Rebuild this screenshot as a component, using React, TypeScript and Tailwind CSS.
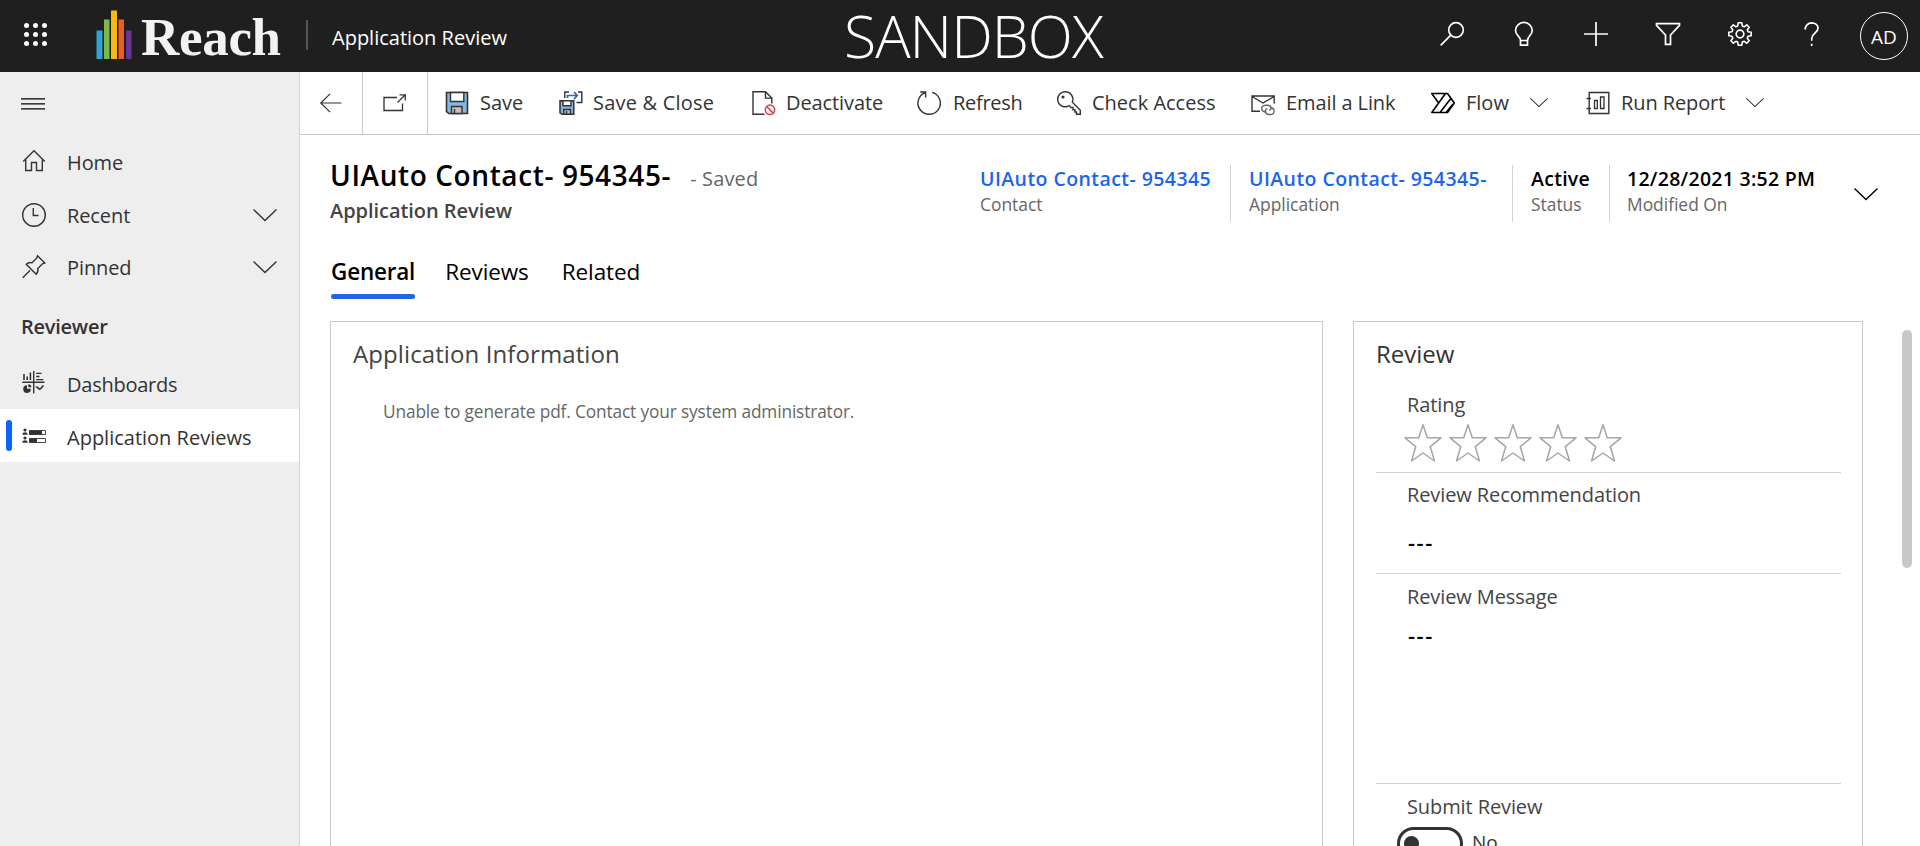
import type { ReactNode } from "react";

type IconProps = { className?: string; children?: ReactNode };

function Line({ className = "", children }: IconProps) {
  return (
    <svg
      viewBox="0 0 24 24"
      className={`h-6 w-6 shrink-0 overflow-visible ${className}`}
      fill="none"
      stroke="currentColor"
      strokeWidth="1.4"
    >
      {children}
    </svg>
  );
}

function Chevron({ className = "" }: { className?: string }) {
  return (
    <svg
      viewBox="0 0 24 12"
      className={`shrink-0 overflow-visible ${className}`}
      fill="none"
      stroke="currentColor"
      strokeWidth="1.4"
    >
      <path d="M.5 .5 12 11.5 23.5 .5" />
    </svg>
  );
}

const navIcons = {
  home: (
    <Line>
      <path d="M1.2 11.5 12 .8 22.8 11.5M3.7 9.200V20.500H9.500V12.500H14.500V20.500H20.300V9.200" />
    </Line>
  ),
  recent: (
    <Line>
      <circle cx="12" cy="12" r="11.3" />
      <path d="M11.3 5V12.5H16.5" />
    </Line>
  ),
  pinned: (
    <Line>
      <path d="M.7 22.8 8 15.500M15.5 .8 22.8 8 20.5 8.800 15.8 13.5C16.3 15.500 15.6 17.800 14.2 19.3L4.2 9.300C5.7 7.900 8 7.200 10.1 7.800L14.8 3Z" />
    </Line>
  ),
  dashboards: (
    <Line>
      <path d="M11.7 0V22.5M.3 11.2H22.500" />
      <path d="M2 3V9M5.200 5.500V9M8.400 1.500V9" strokeWidth="1.600" />
      <path d="M14.200 2.300H19.500M14.200 5.500H17.500M14.200 8.700H21.300" strokeWidth="1.300" />
      <path d="M5 14.300V17.800H8.800A3.800 3.800 0 1 1 5 14.300Z" fill="currentColor" stroke="none" />
      <path d="M6.300 13.300V16.300H9.300A3 3 0 0 0 6.300 13.300Z" fill="currentColor" stroke="none" />
      <path d="M14 16.500C15.500 15 17 19.500 18.500 17.800L21.500 14.500" strokeWidth="1.700" />
    </Line>
  ),
  reviews: (
    <Line>
      <circle cx="3" cy="6" r="1.600" fill="currentColor" stroke="none" />
      <path d="M.3 10.700C.3 7.500 5.700 7.500 5.700 10.700Z" fill="currentColor" stroke="none" />
      <circle cx="3" cy="14" r="1.600" fill="currentColor" stroke="none" />
      <path d="M.3 18.700C.3 15.500 5.700 15.500 5.700 18.700Z" fill="currentColor" stroke="none" />
      <path d="M7.500 6.500H23.500V10.500H7.500ZM7.500 14.500H23.500V18.500H7.500Z" strokeWidth=".9" />
      <path d="M7 6.500H20V10.500H7ZM7 14.500H15V18.500H7Z" fill="currentColor" stroke="none" />
    </Line>
  ),
};

function Floppy() {
  return (
    <Line>
      <path d="M1.500 1.500H22.500V22.500H4L1.500 20.500Z" fill="#85b7e2" strokeWidth="1.600" />
      <path d="M5.500 1.500H18.800V10.500H5.500Z" fill="#fff" />
      <path d="M6.500 22.500V15.500H17V22.500Z" fill="#c9bfb8" />
      <path d="M9.500 18V22.500" />
    </Line>
  );
}

function FloppyClose() {
  return (
    <Line>
      <path d="M1 9.700H14.800V23.300H3L1 21.800Z" fill="#85b7e2" strokeWidth="1.500" />
      <path d="M4 9.700H12V14.700H4Z" fill="#fff" />
      <path d="M4.700 23.300V18.500H11.500V23.300Z" fill="#c9bfb8" />
      <path d="M7.500 20V23.300" />
      <path d="M10 1H5.800V7M19 1H22.800V11.500H17.500" />
      <path d="M8.500 7V4.500H18M15 1.200 18.300 4.500 15 7.800" stroke="#2b6cb0" strokeWidth="1.700" />
    </Line>
  );
}

function DeactivatePage() {
  return (
    <Line>
      <path d="M12.500 23.300H1V.8H13.500L19.800 7.100V12.500M13.500 .8V7.100H19.800" />
      <circle cx="18" cy="18.800" r="4.700" stroke="#d9454d" strokeWidth="1.600" />
      <path d="M14.700 15.500 21.300 22.100" stroke="#d9454d" strokeWidth="1.600" />
    </Line>
  );
}

function RefreshArrow() {
  return (
    <Line>
      <path d="M15.200 1.300A11.200 11.200 0 1 1 8.200 1.600M3.200 1H8.600V6.400" />
    </Line>
  );
}

function Key() {
  return (
    <Line>
      <path d="M8.300 .8A7.500 7.500 0 1 0 10.200 15.500L12 14.500L14 16.500H16V18.800H18V21H19.500V23.200H23.300V19.200L15.300 11.200A7.500 7.500 0 0 0 8.300 .8Z" />
      <circle cx="6" cy="6" r="1.600" fill="currentColor" stroke="none" />
    </Line>
  );
}

function MailLink() {
  return (
    <Line>
      <path d="M9 20.200H1V5H23.200V12.500M1 5.500 12 12 23.200 5.500" />
      <path d="M15.500 20.800C9.500 21.500 9 14.500 14.500 14.300H16.500C21 14.300 21 19 18 19.300" stroke="#666" />
      <path d="M19.500 16.800C24.500 17 24 23.500 19.500 23.500H17.800C13.500 23.500 13.300 18 16.500 17.600" stroke="#666" />
    </Line>
  );
}

function FlowMark() {
  return (
    <Line className="text-black">
      <path
        d="M.8 2.500H16.500L23.300 12 16.500 21.500H.8L7.600 12ZM.8 21.500 14.500 2.500M9 21.500 20 7.200M15 21.500 22 13"
        strokeWidth="1.600"
        strokeLinejoin="round"
      />
    </Line>
  );
}

function Report() {
  return (
    <Line>
      <path d="M3.200 1.500H22.800V22.500H3.200Z" />
      <path d="M.5 7.500H5M.5 17.500H5" />
      <path d="M8.500 9.500H11.300V17.500H8.500ZM14.500 6H18V17.500H14.500Z" strokeWidth="1.300" />
    </Line>
  );
}

function Command({
  icon,
  label,
  className,
  textClass = "ml-[11px]",
  chevron,
}: {
  icon: ReactNode;
  label: string;
  className: string;
  textClass?: string;
  chevron?: boolean;
}) {
  return (
    <button className={`flex h-full shrink-0 items-center whitespace-nowrap ${className}`}>
      {icon}
      <span className={`leading-7 ${textClass}`}>{label}</span>
      {chevron && <Chevron className="ml-[21px] mt-[-2px] h-[9px] w-[18px]" />}
    </button>
  );
}

function NavItem({
  icon,
  label,
  chevron,
  className = "",
  textClass = "pt-[2px]",
}: {
  icon: ReactNode;
  label: string;
  chevron?: boolean;
  className?: string;
  textClass?: string;
}) {
  return (
    <a className={`flex shrink-0 items-center pl-[22px] pr-[22px] ${className}`}>
      {icon}
      <span className={`ml-[21px] flex-1 whitespace-nowrap leading-7 ${textClass}`}>{label}</span>
      {chevron && <Chevron className="h-3 w-6" />}
    </a>
  );
}

function HeaderField({
  value,
  label,
  link,
  className,
}: {
  value: string;
  label: string;
  link?: boolean;
  className: string;
}) {
  return (
    <div className={`h-[57px] shrink-0 whitespace-nowrap pt-px ${className}`}>
      <div
        className={`text-[19.5px] font-semibold leading-[26px] ${
          link ? "tracking-[0.43px] text-[#1b66e8]" : "tracking-[0.28px] text-black"
        }`}
      >
        {value}
      </div>
      <div className="text-[17.4px] leading-[25px] text-[#666]">{label}</div>
    </div>
  );
}

function Star() {
  return (
    <svg
      viewBox="0 0 38 38"
      className="h-[38px] w-[38px]"
      fill="none"
      stroke="#a6a6a6"
      strokeWidth="1.5"
      strokeLinejoin="round"
    >
      <path d="M19 .8 23.300 13.800H37L26.300 22.700 30.500 37 19 29 7.500 37 11.700 22.700 1 13.800H14.700Z" />
    </svg>
  );
}

function TopBar() {
  const dots = [0, 9, 18];
  return (
    <header className="flex h-[72px] shrink-0 items-center bg-[#1f1f1f] text-white">
      <svg viewBox="0 0 24 24" className="ml-6 mt-[-2px] h-6 w-6 shrink-0" fill="#fff">
        {dots.map((y) => dots.map((x) => <circle key={`${x}-${y}`} cx={x + 2.5} cy={y + 2.5} r="2.5" />))}
      </svg>
      <svg viewBox="0 0 36 49" className="ml-12 mt-[-4px] h-[49px] w-9 shrink-0">
        <path d="M.5 20.500H6.500V49H.5Z" fill="#2ea3d9" />
        <path d="M8 9.500H13.500V49H8Z" fill="#7dba41" />
        <path d="M15 .5H21V49H15Z" fill="#fbb814" />
        <path d="M22.500 9.500H28V49H22.500Z" fill="#ee5a28" />
        <path d="M30 20.500H35.500V49H30Z" fill="#6a3590" />
      </svg>
      <span className="ml-[9px] mt-[3px] w-[165px] shrink-0 whitespace-nowrap font-['Liberation_Serif',serif] text-[53px] font-bold leading-[69px] tracking-[-0.3px] text-[#f2f2f2]">
        Reach
      </span>
      <span className="mt-[-2px] h-[30px] w-[2px] shrink-0 bg-[#555]" />
      <span className="ml-[24px] mt-[3px] w-[512px] shrink-0 whitespace-nowrap text-[20px]">Application Review</span>
      <span className="mt-[-2px] w-[596px] shrink-0 whitespace-nowrap text-[59px] font-light leading-[70px] tracking-[-1px]">
        SANDBOX
      </span>
      <div className="mt-[-4px] flex shrink-0 items-center gap-12">
        <Line>
          <circle cx="16" cy="8" r="7.300" strokeWidth="1.700" />
          <path d="M10.800 13.200 .7 23.300" strokeWidth="1.700" />
        </Line>
        <Line>
          <path
            d="M8.500 18.500C8.500 14 3.500 13.500 3.500 8.500A8.300 8 0 0 1 20.200 8.500C20.200 13.500 15.500 14 15.500 18.500ZM8.500 18.500V23.200H15.500V18.500"
            strokeWidth="1.700"
          />
        </Line>
        <Line>
          <path d="M12 0V24M0 12H24" strokeWidth="1.700" />
        </Line>
        <Line>
          <path d="M.5 1.700H23.500V3.300L14.500 13V22.300H9.500V13L.5 3.300Z" strokeWidth="1.700" />
        </Line>
        <Line>
          <path
            d="M10.200 .8H13.800L14.300 4 16.200 4.800 18.800 2.900 21.200 5.300 19.300 7.900 20 9.700 23.200 10.200V13.800L20 14.300 19.300 16.200 21.200 18.800 18.800 21.200 16.200 19.300 14.300 20 13.800 23.200H10.200L9.700 20 7.900 19.300 5.300 21.200 2.900 18.800 4.800 16.200 4 14.300 .8 13.800V10.200L4 9.700 4.800 7.900 2.900 5.300 5.300 2.900 7.900 4.800 9.700 4Z"
            strokeWidth="1.600"
            strokeLinejoin="round"
          />
          <circle cx="12" cy="12" r="3.800" strokeWidth="1.700" />
        </Line>
        <Line>
          <path
            d="M5.200 7.500A6.500 6.500 0 0 1 11.500 .9C15.500 .9 18 3.300 18 6.300C18 11 11.700 11.500 11.700 16.500V18.800M11.700 21.800V24"
            strokeWidth="1.700"
          />
        </Line>
      </div>
      <div className="ml-[36px] flex h-12 w-12 shrink-0 items-center justify-center rounded-full border border-white pt-[2px] text-[19px]">
        AD
      </div>
    </header>
  );
}

function Sidebar() {
  return (
    <nav className="flex w-[300px] shrink-0 flex-col border-r border-[#d2d2d2] bg-[#eee] text-[20px] tracking-[-0.1px] text-[#333]">
      <svg viewBox="0 0 24 12" className="ml-[21px] mt-[26px] h-3 w-6 shrink-0" stroke="#000" strokeWidth="1.3">
        <path d="M0 .8H24M0 5.800H24M0 10.800H24" />
      </svg>
      <NavItem className="mt-[26px] h-[52px]" icon={navIcons.home} label="Home" />
      <NavItem className="h-[53px]" icon={navIcons.recent} label="Recent" chevron />
      <NavItem className="h-[52px]" icon={navIcons.pinned} label="Pinned" chevron />
      <h2 className="mt-[20px] pl-[21px] font-semibold leading-7 tracking-[-0.25px]">Reviewer</h2>
      <NavItem
        className="mt-[16px] h-[52px]"
        icon={navIcons.dashboards}
        label="Dashboards"
        textClass="pt-[4px] tracking-[-0.25px]"
      />
      <a className="flex h-[53px] shrink-0 items-center bg-white pl-[6px]">
        <span className="h-[31px] w-[6px] rounded-sm bg-[#0a64f5]" />
        <span className="ml-[10px]">{navIcons.reviews}</span>
        <span className="ml-[21px] whitespace-nowrap pt-[4px] leading-7 tracking-normal">Application Reviews</span>
      </a>
    </nav>
  );
}

function CommandBar() {
  return (
    <div className="flex h-[63px] shrink-0 items-center border-b border-[#c8c8c8] text-[20px] text-[#333]">
      <button className="flex h-full w-[63px] shrink-0 items-center justify-center border-r border-[#c8c8c8]">
        <svg
          viewBox="0 0 22 20"
          className="h-5 w-[22px] overflow-visible"
          fill="none"
          stroke="currentColor"
          strokeWidth="1.2"
        >
          <path d="M21.500 10H1M10 .8.800 10 10 19.200" />
        </svg>
      </button>
      <button className="flex h-full w-[65px] shrink-0 items-center justify-center border-r border-[#c8c8c8]">
        <svg
          viewBox="0 0 24 18"
          className="h-[18px] w-6 overflow-visible"
          fill="none"
          stroke="currentColor"
          strokeWidth="1.3"
        >
          <path d="M14 3.500H1V16.500H19.500V9.500M14.500 8.500 22 1M16.500 .8H22.300V6.600" />
        </svg>
      </button>
      <Command className="ml-[17px] w-[114px]" icon={<Floppy />} label="Save" />
      <Command
        className="w-[193px]"
        icon={<FloppyClose />}
        label="Save & Close"
        textClass="ml-[10px] tracking-[0.2px]"
      />
      <Command
        className="w-[165px]"
        icon={<DeactivatePage />}
        label="Deactivate"
        textClass="ml-[10px] tracking-[-0.1px]"
      />
      <Command
        className="w-[140px]"
        icon={<RefreshArrow />}
        label="Refresh"
        textClass="ml-[12px] tracking-[-0.3px]"
      />
      <Command className="w-[194px]" icon={<Key />} label="Check Access" />
      <Command className="w-[180px]" icon={<MailLink />} label="Email a Link" textClass="ml-[11px] tracking-[-0.1px]" />
      <Command className="w-[155px]" icon={<FlowMark />} label="Flow" chevron />
      <Command
        className="w-[190px]"
        icon={<Report />}
        label="Run Report"
        textClass="ml-[11px] tracking-[-0.1px]"
        chevron
      />
    </div>
  );
}

function RecordHeader() {
  return (
    <div className="flex h-[94px] shrink-0 pl-[30px]">
      <div className="w-[650px] shrink-0 pt-[21px]">
        <div className="flex items-baseline whitespace-nowrap leading-[38px]">
          <h1 className="text-[28px] font-semibold tracking-[0.6px] text-black">UIAuto Contact- 954345-</h1>
          <span className="ml-[19px] text-[20px] tracking-[0.15px] text-[#666]">- Saved</span>
        </div>
        <div className="mt-[-1px] text-[20px] font-semibold leading-7 tracking-[-0.05px] text-[#444]">
          Application Review
        </div>
      </div>
      <div className="flex pt-[30px]">
        <HeaderField
          className="w-[251px] border-r border-[#d2d2d2]"
          value="UIAuto Contact- 954345"
          label="Contact"
          link
        />
        <HeaderField
          className="w-[282px] border-r border-[#d2d2d2] pl-[18px]"
          value="UIAuto Contact- 954345-"
          label="Application"
          link
        />
        <HeaderField className="w-[97px] border-r border-[#d2d2d2] pl-[18px]" value="Active" label="Status" />
        <HeaderField className="w-[244px] pl-[17px]" value="12/28/2021 3:52 PM" label="Modified On" />
        <Chevron className="mt-[23px] h-3 w-6 text-black" />
      </div>
    </div>
  );
}

function Tabs() {
  return (
    <div className="mt-[25px] flex h-[45px] shrink-0 gap-[30px] pl-[31px] text-[22.5px] leading-[36px] tracking-[-0.1px] text-black">
      <div className="flex flex-col font-semibold tracking-[-0.2px]">
        General
        <span className="mt-[4px] h-[5px] rounded-full bg-[#2266e3]" />
      </div>
      <div>Reviews</div>
      <div className="ml-[3px]">Related</div>
    </div>
  );
}

function Field({ label, children, className }: { label: string; children: ReactNode; className: string }) {
  return (
    <div className={`pl-[31px] ${className}`}>
      <div className="text-[20px] leading-7 tracking-[-0.1px] text-[#444]">{label}</div>
      {children}
    </div>
  );
}

function Dashes({ className }: { className: string }) {
  return (
    <div className={`ml-px text-[22px] font-semibold leading-7 tracking-[1.5px] text-black ${className}`}>---</div>
  );
}

export default function App() {
  return (
    <div className="flex h-[846px] w-[1920px] flex-col overflow-hidden bg-white font-['Open_Sans','Noto_Sans',sans-serif]">
      <TopBar />
      <div className="flex min-h-0 flex-1">
        <Sidebar />
        <main className="flex min-w-0 flex-1 flex-col">
          <CommandBar />
          <RecordHeader />
          <Tabs />
          <div className="mt-[22px] flex min-h-0 flex-1 pl-[30px]">
            <section className="w-[993px] shrink-0 border border-b-0 border-[#c8c8c8] pl-[22px] pt-[14px]">
              <h2 className="text-[24px] leading-9 tracking-[0.1px] text-[#444]">Application Information</h2>
              <p className="ml-[30px] mt-[26px] text-[17.3px] leading-7 tracking-[-0.14px] text-[#666]">
                Unable to generate pdf. Contact your system administrator.
              </p>
            </section>
            <section className="ml-[30px] w-[510px] shrink-0 overflow-hidden border border-b-0 border-[#c8c8c8] pl-[22px] pr-[21px] pt-[14px]">
              <h2 className="text-[24px] leading-9 text-[#333]">Review</h2>
              <Field label="Rating" className="mt-[19px] h-[82px] border-b border-[#d2d2d2]">
                <div className="ml-[-3px] mt-[5px] flex gap-[7px]">
                  <Star />
                  <Star />
                  <Star />
                  <Star />
                  <Star />
                </div>
              </Field>
              <Field label="Review Recommendation" className="h-[101px] border-b border-[#d2d2d2] pt-[8px]">
                <Dashes className="mt-[19px]" />
              </Field>
              <Field label="Review Message" className="h-[210px] border-b border-[#d2d2d2] pt-[9px]">
                <Dashes className="mt-[10px]" />
              </Field>
              <Field label="Submit Review" className="pt-[9px]">
                <div className="ml-[-10px] mt-[6px] flex items-start">
                  <span className="flex h-[33px] w-[66px] items-center rounded-full border-[3px] border-[#333] pl-[4px]">
                    <span className="h-[15px] w-[15px] rounded-full bg-[#333]" />
                  </span>
                  <span className="ml-[9px] mt-px text-[19px] leading-7 text-[#333]">No</span>
                </div>
              </Field>
            </section>
            <span className="ml-[39px] mt-[9px] h-[238px] w-[10px] shrink-0 rounded-full bg-[#c8c8c8]" />
          </div>
        </main>
      </div>
    </div>
  );
}
